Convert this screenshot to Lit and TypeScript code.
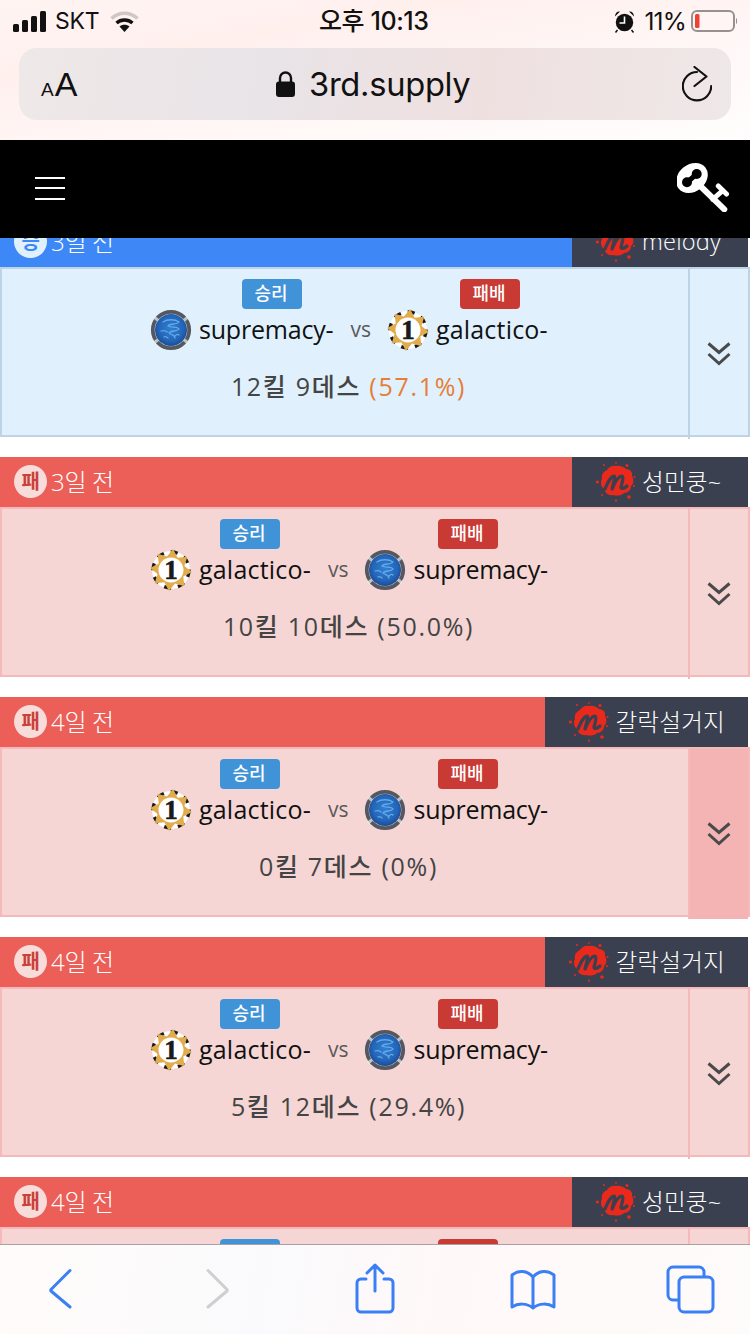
import { LitElement, html, css } from "lit";
import { customElement } from "lit/decorators.js";

type Side = "supremacy" | "galactico";
interface Match {
  kind: "win" | "lose";
  ago: string;
  user: string;
  first: Side;
  kills: string;
  pct: string;
  hot?: boolean;
  hover?: boolean;
  badgeLeft: number;
}

const MATCHES: Match[] = [
  { kind: "win", ago: "3일 전", user: "melody", first: "supremacy", kills: "12킬 9데스", pct: "(57.1%)", hot: true, badgeLeft: 242 },
  { kind: "lose", ago: "3일 전", user: "성민쿵~", first: "galactico", kills: "10킬 10데스", pct: "(50.0%)", badgeLeft: 220 },
  { kind: "lose", ago: "4일 전", user: "갈락설거지", first: "galactico", kills: "0킬 7데스", pct: "(0%)", hover: true, badgeLeft: 220 },
  { kind: "lose", ago: "4일 전", user: "갈락설거지", first: "galactico", kills: "5킬 12데스", pct: "(29.4%)", badgeLeft: 220 },
  { kind: "lose", ago: "4일 전", user: "성민쿵~", first: "galactico", kills: "3킬 8데스", pct: "(27.3%)", badgeLeft: 220 },
];

const supremacyIcon = () => html`<svg class="avatar" viewBox="0 0 42 42">
  <defs>
    <radialGradient id="sph" cx="50%" cy="45%" r="55%">
      <stop offset="0%" stop-color="#2f80d2"/><stop offset="70%" stop-color="#2465b8"/><stop offset="100%" stop-color="#1b4c95"/>
    </radialGradient>
  </defs>
  <circle cx="21" cy="21" r="18.2" fill="none" stroke="#55595f" stroke-width="3.8"/>
  <path d="M4 8L10 13M38 8L32 13M4 34L10 29M38 34L32 29" stroke="#e8eef4" stroke-width="3" opacity=".7"/>
  <circle cx="21" cy="21" r="16" fill="url(#sph)"/>
  <path d="M13 13c4-3 12-3 16 0-2 3-9 1-11 4 3 2 10 0 11 3-2 3-8 1-10 4 2 2 5 1 6 5M11 22c3-1 5 0 6 1M25 27c1-1 3-2 4-1M14 28c2-1 3 0 4 1" fill="none" stroke="#62a9e6" stroke-width="1.3" stroke-linecap="round"/>
</svg>`;

const starPoints = () => {
  const pts: string[] = [];
  for (let i = 0; i < 16; i++) {
    const r = i % 2 ? 14 : 21;
    const a = (i * Math.PI) / 8 - Math.PI / 2 + 0.1;
    pts.push(`${(21 + r * Math.cos(a)).toFixed(1)},${(21 + r * Math.sin(a)).toFixed(1)}`);
  }
  return pts.join(" ");
};

const galacticoIcon = () => html`<svg class="avatar" viewBox="0 0 42 42">
  <circle cx="21" cy="21" r="19" fill="#fff"/>
  <circle cx="21" cy="21" r="18" fill="none" stroke="#1b1b1b" stroke-width="3.4" stroke-dasharray="7 7"/>
  <polygon points="${starPoints()}" fill="#e2ac4c"/>
  <circle cx="21" cy="21" r="12.5" fill="#fff"/>
  <text x="21" y="30" text-anchor="middle" font-family="'Liberation Serif',serif" font-weight="700" font-size="27" fill="#1a1a1a" stroke="#1a1a1a" stroke-width=".6">1</text>
</svg>`;

const meetupLogo = () => html`<svg class="logo" viewBox="0 0 40 40">
  <path d="M20 4c4-1 8 1 10 3 4 0 7 3 6 7 2 3 2 8-1 10 0 4-3 7-7 7-3 3-8 3-11 2-4 1-8-2-9-6-3-2-4-7-2-10-1-4 1-7 5-9 2-3 5-5 9-4z" fill="#e8291c"/>
  <g fill="#e8291c">
    <circle cx="20" cy="0.9" r="0.9"/><circle cx="8" cy="3" r="1"/><circle cx="31" cy="3.5" r="1.5"/><circle cx="1.500" cy="20" r="1.6"/>
    <circle cx="38" cy="24" r="1"/><circle cx="38.500" cy="15" r="1"/><circle cx="33" cy="35" r="1.8"/><circle cx="20" cy="38.700" r="1.1"/><circle cx="6" cy="33" r="1"/>
  </g>
  <path d="M9 27C12 20 14 15 18 14C20 14 17 22 16 27C19 20 22 14 26 14C28 14 26 22 25 25C25 27 28 27 31 24" fill="none" stroke="#3a4050" stroke-width="3.2" stroke-linecap="round" stroke-linejoin="round"/>
</svg>`;

const chevrons = () => html`<svg class="chev" viewBox="0 0 24 24">
  <path d="M1.500 1.500 L12 10.500 L22.500 1.500 M1.500 12 L12 21.500 L22.500 12" fill="none" stroke="#4a4a4a" stroke-width="3"/>
</svg>`;

@customElement("app-root")
export class AppRoot extends LitElement {
  static styles = css`
    :host { display: block; width: 750px; height: 1334px; overflow: hidden; background: #fff;
      font-family: "Open Sans", "Noto Sans CJK KR", sans-serif; }
    .page { position: relative; display: flex; flex-direction: column; height: 1334px; }

    .chrome { height: 140px; flex: none; box-sizing: border-box; padding: 0 19px;
      background: linear-gradient(170deg, #fff4f2 0%, #fff0ee 30%, #fff9f8 70%, #fffdfd 100%); }
    .status { height: 48px; position: relative; display: flex; align-items: center; margin: 0 -19px; padding: 0 12px 6px 13px;
      box-sizing: border-box; font-family: Inter, "Noto Sans CJK KR", sans-serif; color: #111; font-size: 23px; }
    .status .left, .status .right { display: flex; align-items: center; }
    .status .right { margin-left: auto; }
    .carrier { margin: 0 11px 0 9px; font-size: 23px; letter-spacing: -.2px; }
    .time { position: absolute; left: 319px; top: 7px; font-size: 25px; font-weight: 500; line-height: 28px; white-space: nowrap; letter-spacing: -.4px; }
    .pct-batt { margin: 0 5px 0 9px; font-size: 24.5px; letter-spacing: -.8px; }
    .urlbar { height: 72px; border-radius: 18px; display: flex; align-items: center; padding: 0 19px 0 22px;
      background: linear-gradient(100deg, #efe8e8 0%, #e9e4e8 35%, #efe0e0 65%, #efe8e8 100%); color: #111; }
    .aa { font-family: "Liberation Sans", sans-serif; width: 235px; flex: none; white-space: nowrap; }
    .aa small { font-size: 19px; margin-right: 1px; }
    .aa span { font-size: 34px; }
    .host { display: flex; align-items: center; flex: 1; font-family: Inter, sans-serif; font-size: 32.7px; letter-spacing: -.3px; }
    .host svg { margin-right: 14px; }

    .nav { height: 98px; flex: none; background: #000; display: flex; align-items: center; justify-content: space-between;
      padding: 0 21px 0 35px; position: relative; z-index: 1; }
    .burger { width: 30px; display: flex; flex-direction: column; gap: 8.5px; margin-bottom: 2px; }
    .burger i { display: block; height: 2px; background: #fff; }
    .key { margin-bottom: 4px; }

    .list { flex: 1; overflow: hidden; min-height: 0; }
    .scroll { margin-top: -21px; display: flex; flex-direction: column; gap: 20px; }

    .head { height: 50px; display: flex; padding-right: 2px; }
    .bar { flex: 1; display: flex; align-items: center; padding: 0 0 1px 14px; box-sizing: border-box; color: #fff; font-size: 24px; font-weight: 300; letter-spacing: -.3px; }
    .bar .ago { padding-bottom: 3px; }
    .win .bar { background: #3d88f6; }
    .lose .bar { background: #eb5f58; }
    .mark { width: 33px; height: 33px; border-radius: 50%; display: flex; align-items: center; justify-content: center;
      margin-right: 4px; background: #f8dcda; color: #c9413b; font-size: 20px; font-weight: 700; padding-bottom: 2px; box-sizing: border-box; }
    .win .mark { background: #e0f1fd; color: #3d88f6; }
    .user { background: #3a4050; color: #fff; display: flex; align-items: center; gap: 6px; padding: 0 23px 0 24px;
      font-size: 23.6px; font-weight: 300; white-space: nowrap; }
    .user span { padding-bottom: 2px; min-width: 83px; letter-spacing: .2px; }
    .logo { width: 40px; height: 40px; flex: none; }

    .body { height: 170px; box-sizing: border-box; display: flex; border: 2px solid; }
    .win .body { background: #e0f1fd; border-color: #bed3e3; }
    .lose .body { background: #f6d6d5; border-color: #f5b9b9; }
    .main { flex: 1; min-width: 0; margin-left: -2px; padding-top: 10px; }
    .badges { display: flex; gap: 158px; }
    .badge { width: 60px; height: 30px; border-radius: 4px; color: #fff; font-size: 18px; font-weight: 500; box-sizing: border-box;
      display: flex; align-items: center; justify-content: center; padding: 0 2px 4px 0; }
    .badge.w { background: #4193d8; }
    .badge.l { background: #c93a35; }
    .duel { display: flex; align-items: center; height: 42px; padding-left: 150px; font-size: 25px; color: #111; white-space: nowrap; }
    .avatar { width: 42px; height: 42px; flex: none; margin-right: 7px; }
    .name { flex: none; padding-bottom: 2px; }
    .name.s { letter-spacing: -.2px; }
    .name.g { letter-spacing: .2px; }
    .vs { flex: none; margin: 0 16px 0 17px; color: #5a5a5a; font-size: 21px; line-height: 42px; padding-bottom: 2px; }
    .stat { margin-top: 16px; height: 38px; text-align: center; padding-left: 9px; font-size: 25px; font-weight: 500; color: #444;
      letter-spacing: 1.7px; line-height: 38px; white-space: nowrap; }
    .stat .hot { color: #e67e35; }
    .toggle { width: 60px; height: 170px; flex: none; box-sizing: border-box; border-left: 2px solid; display: flex;
      align-items: center; justify-content: center; }
    .win .toggle { border-color: #bed3e3; }
    .lose .toggle { border-color: #f5b9b9; }
    .toggle.hover { background: #f4b4b4; }
    .chev { width: 24px; height: 24px; }

    .toolbar { position: absolute; left: 0; right: 0; bottom: 0; height: 89px; border-top: 1px solid #a8a0a2;
      background: linear-gradient(100deg, #fffbfa 0%, #fafafc 35%, #fff8f8 60%, #fefbfb 100%);
      display: block; z-index: 2; }
    .toolbar svg { display: block; }
  `;

  private player(side: Side) {
    return side === "supremacy"
      ? html`${supremacyIcon()}<span class="name s">supremacy-</span>`
      : html`${galacticoIcon()}<span class="name g">galactico-</span>`;
  }

  private card(m: Match) {
    const other: Side = m.first === "supremacy" ? "galactico" : "supremacy";
    return html`<section class=${m.kind}>
      <div class="head">
        <div class="bar"><span class="mark">${m.kind === "win" ? "승" : "패"}</span><span class="ago">${m.ago}</span></div>
        <div class="user">${meetupLogo()}<span>${m.user}</span></div>
      </div>
      <div class="body">
        <div class="main">
          <div class="badges" style="padding-left:${m.badgeLeft}px">
            <span class="badge w">승리</span><span class="badge l">패배</span>
          </div>
          <div class="duel">${this.player(m.first)}<span class="vs">vs</span>${this.player(other)}</div>
          <div class="stat">${m.kills} <span class=${m.hot ? "hot" : ""}>${m.pct}</span></div>
        </div>
        <div class="toggle ${m.hover ? "hover" : ""}">${chevrons()}</div>
      </div>
    </section>`;
  }

  render() {
    return html`<div class="page">
      <header class="chrome">
        <div class="status">
          <div class="left">
            <svg width="33" height="21" viewBox="0 0 33 21" fill="#111">
              <rect x="0" y="13" width="6" height="8" rx="1.5"/><rect x="9" y="9" width="6" height="12" rx="1.5"/>
              <rect x="18" y="5" width="6" height="16" rx="1.5"/><rect x="27" y="0" width="6" height="21" rx="1.5"/>
            </svg>
            <span class="carrier">SKT</span>
            <svg width="29" height="21" viewBox="0 0 29 21">
              <path d="M1.500 7.500C9 .5 20 .5 27.500 7.500" fill="none" stroke="#cfc6c6" stroke-width="3.6"/>
              <path d="M6.500 12C11 8 18 8 22.500 12" fill="none" stroke="#111" stroke-width="3.4"/>
              <path d="M14.500 21L9.500 15.500C12 13 17 13 19.500 15.500Z" fill="#111"/>
            </svg>
          </div>
          <span class="time">오후 10:13</span>
          <div class="right">
            <svg width="21" height="23" viewBox="0 0 21 23">
              <circle cx="10.500" cy="12.500" r="8.700" fill="#111"/>
              <path d="M1 6.500C1 3 3.500 1 6 1.500ZM20 6.500C20 3 17.500 1 15 1.500Z" fill="#111"/>
              <path d="M3.500 20l-2 2.500M17.500 20l2 2.500" stroke="#111" stroke-width="1.500"/>
              <path d="M10.500 6.500v6.500H5.500" fill="none" stroke="#fff" stroke-width="1.600"/>
            </svg>
            <span class="pct-batt">11%</span>
            <svg width="47" height="22" viewBox="0 0 47 22">
              <rect x="1" y="1" width="42" height="20" rx="5" fill="none" stroke="#979191" stroke-width="2"/>
              <rect x="4" y="4" width="4.500" height="14" rx="1.500" fill="#ee4233"/>
              <path d="M45 8c1.500.4 1.500 5.600 0 6z" fill="#979191"/>
            </svg>
          </div>
        </div>
        <div class="urlbar">
          <div class="aa"><small>A</small><span>A</span></div>
          <div class="host">
            <svg width="19" height="26" viewBox="0 0 19 26" fill="#111">
              <path d="M4 12V7a5.500 5.500 0 0 1 11 0v5" fill="none" stroke="#111" stroke-width="2.400"/>
              <rect x="0" y="10.500" width="19" height="15.500" rx="3"/>
            </svg>3rd.supply
          </div>
          <svg width="30" height="36" viewBox="0 0 30 36" fill="none" stroke="#111" stroke-width="2.200" stroke-linecap="round" stroke-linejoin="round">
            <path d="M15 6A14.200 14.200 0 1 0 29.200 20.200"/>
            <path d="M12.500 1L24.500 10.500 12.500 20"/>
          </svg>
        </div>
      </header>
      <nav class="nav">
        <div class="burger"><i></i><i></i><i></i></div>
        <svg class="key" width="52" height="50" viewBox="0 0 52 50" stroke-linecap="round">
          <ellipse cx="15" cy="16" rx="17" ry="13.500" transform="rotate(-38 15 16)" fill="#fff"/>
          <circle cx="10" cy="20.300" r="5" fill="#000"/>
          <circle cx="19.700" cy="12" r="5" fill="#000"/>
          <path d="M10 20.300L19.700 12" stroke="#000" stroke-width="5"/>
          <path d="M23.300 24L47.300 47.300" stroke="#fff" stroke-width="6"/>
          <path d="M35.700 37.300L45.700 28.700" stroke="#fff" stroke-width="5"/>
          <path d="M41.300 24L49.500 32" stroke="#fff" stroke-width="5"/>
        </svg>
      </nav>
      <main class="list">
        <div class="scroll">${MATCHES.map((m) => this.card(m))}</div>
      </main>
      <footer class="toolbar">
        <svg width="750" height="89" viewBox="0 0 750 89" fill="none" stroke-linecap="round" stroke-linejoin="round">
          <path d="M70 25.500L51 44.500Q50.500 45 51 46L70 62" stroke="#3a80f4" stroke-width="3"/>
          <path d="M208 25.500L227 44.500Q227.500 45 227 46L208 62" stroke="#cfcfcf" stroke-width="3"/>
          <g stroke="#3a80f4" stroke-width="3">
            <path d="M375 46V20M367 28L375 20 383 28"/>
            <path d="M366 34H361a4 4 0 0 0-4 4V63a4 4 0 0 0 4 4H389a4 4 0 0 0 4-4V38a4 4 0 0 0-4-4H384"/>
            <path d="M533 32C527 25 518 25 512 30V62C518 58 527 58 533 63 539 58 548 58 554 62V30C548 25 539 25 533 32V62"/>
            <path d="M704 31V27a5 5 0 0 0-5-5H673a5 5 0 0 0-5 5V50a5 5 0 0 0 5 5H678"/>
            <rect x="679" y="32" width="34" height="35" rx="5"/>
          </g>
        </svg>
      </footer>
    </div>`;
  }
}
